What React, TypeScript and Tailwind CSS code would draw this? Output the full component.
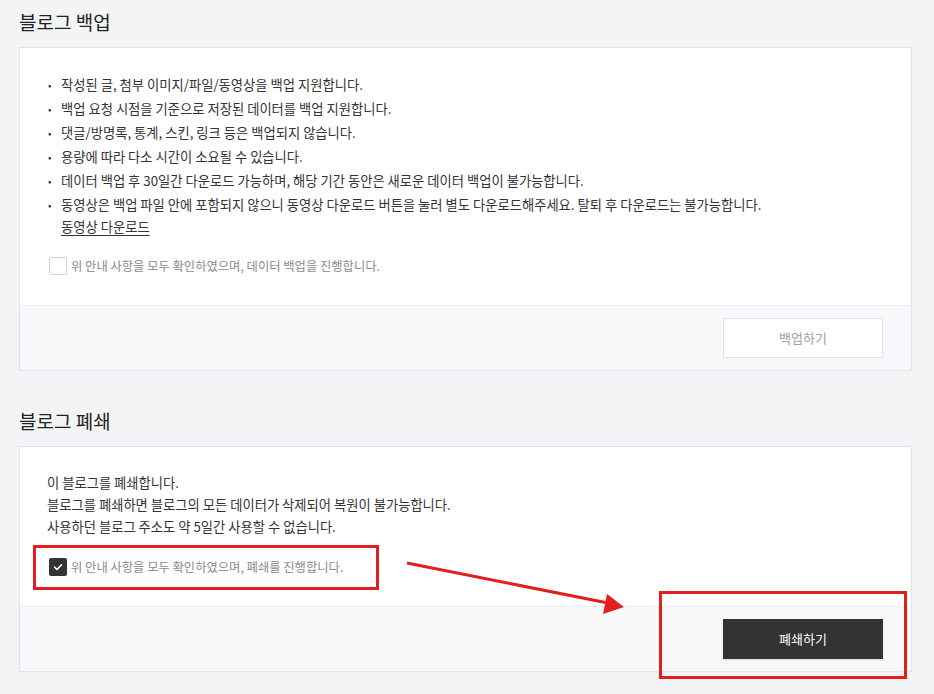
import React from "react";

const font = { fontFamily: '"Noto Sans CJK KR", "Noto Sans", sans-serif' };

function Bullet({ children }: { children: React.ReactNode }) {
  return (
    <li className="relative pl-[13px] mb-[2px] leading-[22px]">
      <span className="absolute left-0 top-0 text-[10px] leading-[22px]">•</span>
      {children}
    </li>
  );
}

function Check({ checked }: { checked?: boolean }) {
  return checked ? (
    <span className="w-[18px] h-[18px] rounded-[2px] bg-[#333333] flex items-center justify-center shrink-0">
      <svg width="12" height="12" viewBox="0 0 12 12" fill="none">
        <path d="M2.5 6.2 L5 8.5 L9.5 3.8" stroke="#fff" strokeWidth="1.6" strokeLinecap="round" strokeLinejoin="round" />
      </svg>
    </span>
  ) : (
    <span className="w-[18px] h-[18px] rounded-[2px] bg-white border border-[#cfd2d8] shrink-0" />
  );
}

export default function App() {
  return (
    <div className="relative min-h-screen bg-[#f3f4f6] pl-[19px] pr-[22px] pt-[8px] text-[#333333]" style={font}>
      <h2 className="text-[19px] leading-[28px] font-normal text-[#222222] mb-[11px]">블로그 백업</h2>
      <div className="bg-white border border-[#e1e4ea]">
        <div className="pt-[26px] pl-[28px] pr-[28px] pb-[28px] text-[13.3px]">
          <ul>
            <Bullet>작성된 글, 첨부 이미지/파일/동영상을 백업 지원합니다.</Bullet>
            <Bullet>백업 요청 시점을 기준으로 저장된 데이터를 백업 지원합니다.</Bullet>
            <Bullet>댓글/방명록, 통계, 스킨, 링크 등은 백업되지 않습니다.</Bullet>
            <Bullet>용량에 따라 다소 시간이 소요될 수 있습니다.</Bullet>
            <Bullet>데이터 백업 후 30일간 다운로드 가능하며, 해당 기간 동안은 새로운 데이터 백업이 불가능합니다.</Bullet>
            <li className="relative pl-[13px] leading-[22px]">
              <span className="absolute left-0 top-0 text-[10px] leading-[22px]">•</span>
              동영상은 백업 파일 안에 포함되지 않으니 동영상 다운로드 버튼을 눌러 별도 다운로드해주세요. 탈퇴 후 다운로드는 불가능합니다.
              <br />
              <span className="underline underline-offset-[3px]">동영상 다운로드</span>
            </li>
          </ul>
          <label className="mt-[17px] h-[22px] flex items-center gap-[4px] ml-[1px] text-[12.3px] text-[#8a8a8a]">
            <Check />
            <span>위 안내 사항을 모두 확인하였으며, 데이터 백업을 진행합니다.</span>
          </label>
        </div>
        <div className="border-t border-[#eceef2] bg-[#f8f9fb] flex justify-end pt-[12px] pb-[12px] pr-[28px]">
          <button className="w-[160px] h-[40px] bg-white border border-[#dfe2e8] text-[13px] text-[#a0a0a0]">백업하기</button>
        </div>
      </div>

      <h2 className="mt-[36px] text-[19px] leading-[28px] font-normal text-[#222222] mb-[11px]">블로그 폐쇄</h2>
      <div className="bg-white border border-[#e1e4ea]">
        <div className="pt-[25px] pl-[27px] pr-[28px] pb-[28px] text-[13.3px] leading-[22px]">
          <p>이 블로그를 폐쇄합니다.</p>
          <p>블로그를 폐쇄하면 블로그의 모든 데이터가 삭제되어 복원이 불가능합니다.</p>
          <p>사용하던 블로그 주소도 약 5일간 사용할 수 없습니다.</p>
          <label className="mt-[18px] h-[22px] flex items-center gap-[4px] ml-[2px] text-[12.3px] text-[#8a8a8a]">
            <Check checked />
            <span>위 안내 사항을 모두 확인하였으며, 폐쇄를 진행합니다.</span>
          </label>
        </div>
        <div className="border-t border-[#eceef2] bg-[#f8f9fb] flex justify-end pt-[12px] pb-[12px] pr-[28px]">
          <button className="w-[160px] h-[40px] bg-[#333333] text-[13px] text-white shadow-[0_1px_2px_rgba(0,0,0,0.15)]">폐쇄하기</button>
        </div>
      </div>

      <svg className="absolute left-0 top-0 pointer-events-none" width="934" height="694" viewBox="0 0 934 694">
        <rect x="34.5" y="546.5" width="343" height="42" fill="none" stroke="#e41e1e" strokeWidth="3" />
        <rect x="660.5" y="592.5" width="245" height="85" fill="none" stroke="#e41e1e" strokeWidth="3" />
        <line x1="407" y1="563" x2="608" y2="603" stroke="#e41e1e" strokeWidth="3" />
        <polygon points="607,594 603,614 624,607" fill="#e41e1e" />
      </svg>
    </div>
  );
}
